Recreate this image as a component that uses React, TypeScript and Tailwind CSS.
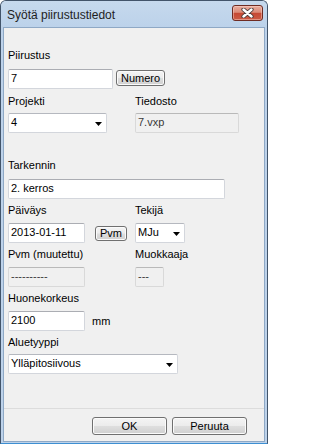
import React from "react";

const Label = ({ children, className = "" }: { children?: React.ReactNode; className?: string }) => (
  <div className={"h-[13px] text-[11px] leading-[13px] text-black whitespace-nowrap " + className}>{children}</div>
);

const TextBox = ({ children, className = "" }: { children?: React.ReactNode; className?: string }) => (
  <div
    className={
      "h-[20px] shrink-0 flex items-center px-[2px] pb-[1px] rounded-[2px] border border-[#d3d6dc] border-t-[#abadb3] bg-white text-[11px] leading-[13px] text-black whitespace-nowrap overflow-hidden " +
      className
    }
  >
    {children}
  </div>
);

const ReadOnly = ({ children, className = "" }: { children?: React.ReactNode; className?: string }) => (
  <div
    className={
      "h-[20px] shrink-0 flex items-center px-[2px] pb-[1px] rounded-[2px] border border-[#d9d9d9] border-t-[#b9b9b9] bg-[#f0f0f0] text-[11px] leading-[13px] text-[#3a3a3a] whitespace-nowrap overflow-hidden " +
      className
    }
  >
    {children}
  </div>
);

const Select = ({ children, className = "" }: { children?: React.ReactNode; className?: string }) => (
  <div
    className={
      "h-[20px] shrink-0 flex items-center justify-between pl-[2px] pr-[4px] pb-[1px] rounded-[2px] border border-[#d3d6dc] border-t-[#b5b8bf] bg-white text-[11px] leading-[13px] text-black whitespace-nowrap overflow-hidden " +
      className
    }
  >
    <span>{children}</span>
    <svg width="7" height="4" viewBox="0 0 7 4" className="mt-[3px] shrink-0">
      <polygon points="0,0 7,0 3.5,4" fill="#000" />
    </svg>
  </div>
);

const Button = ({ children, className = "" }: { children?: React.ReactNode; className?: string }) => (
  <div
    className={
      "shrink-0 flex items-center justify-center rounded-[3px] border border-[#707070] bg-[linear-gradient(to_bottom,#f4f4f4_0%,#ececec_48%,#dedede_52%,#d0d0d0_100%)] shadow-[inset_0_0_0_1px_#fbfbfb] text-[11px] leading-[13px] text-black whitespace-nowrap " +
      className
    }
  >
    {children}
  </div>
);

export default function App() {
  return (
    <div className="w-[268px] h-[444px] flex flex-col overflow-hidden rounded-t-[6px] border border-[#42546a] border-b-[#3d8fd2] bg-[#bdd2ea] font-['Liberation_Sans',Arial,sans-serif]">
      {/* Title bar */}
      <div className="h-[26px] shrink-0 flex items-start justify-between bg-[linear-gradient(to_bottom,#c6d9ed_0%,#bcd2ea_100%)]">
        <div className="pl-[6px] pt-[7px] text-[12px] leading-[14px] text-[#1e1e1e] whitespace-nowrap">
          Syötä piirustustiedot
        </div>
        <div className="mt-[4px] mr-[4px] w-[31px] h-[16px] flex items-center justify-center rounded-[3px] border border-[#6e2b22] bg-[linear-gradient(to_bottom,#e9ad9f_0%,#db8a77_45%,#c64833_52%,#cc5b45_100%)] shadow-[inset_0_0_0_1px_rgba(255,220,210,0.45)]">
          <svg width="13" height="10" viewBox="0 0 13 10">
            <path d="M2.5 1.5 L10.5 8.5 M10.5 1.5 L2.5 8.5" stroke="#4a3a38" strokeWidth="4.2" strokeLinecap="round" />
            <path d="M2.5 1.5 L10.5 8.5 M10.5 1.5 L2.5 8.5" stroke="#ffffff" strokeWidth="2.4" strokeLinecap="round" />
          </svg>
        </div>
      </div>

      {/* Frame + client area */}
      <div className="flex-1 flex flex-col px-[2px] pb-[1px]">
        <div className="flex-1 flex flex-col bg-[#f0f0f0] border border-[#8ea8c5]">
          <div className="flex flex-col pl-[4px] pt-[21px]">
            <Label>Piirustus</Label>
            <div className="mt-[7px] flex items-start">
              <TextBox className="w-[105px]">7</TextBox>
              <Button className="ml-[3px] mt-[1px] w-[49px] h-[16px] pt-[1px]">Numero</Button>
            </div>

            <div className="mt-[6px] flex">
              <Label className="w-[127px]">Projekti</Label>
              <Label>Tiedosto</Label>
            </div>
            <div className="mt-[5px] flex">
              <div className="w-[127px] flex">
                <Select className="w-[99px]">4</Select>
              </div>
              <ReadOnly className="w-[104px]">7.vxp</ReadOnly>
            </div>

            <Label className="mt-[26px]">Tarkennin</Label>
            <TextBox className="mt-[7px] w-[217px] border-[#a9cae8] border-t-[#6e9fcf]">2. kerros</TextBox>

            <div className="mt-[5px] flex">
              <Label className="w-[127px]">Päiväys</Label>
              <Label>Tekijä</Label>
            </div>
            <div className="mt-[6px] flex">
              <div className="w-[127px] flex items-center">
                <TextBox className="w-[77px]">2013-01-11</TextBox>
                <Button className="ml-[10px] w-[32px] h-[15px]">Pvm</Button>
              </div>
              <Select className="w-[50px]">MJu</Select>
            </div>

            <div className="mt-[5px] flex">
              <Label className="w-[127px]">Pvm (muutettu)</Label>
              <Label>Muokkaaja</Label>
            </div>
            <div className="mt-[6px] flex">
              <div className="w-[127px] flex">
                <ReadOnly className="w-[77px]">----------</ReadOnly>
              </div>
              <ReadOnly className="w-[29px]">---</ReadOnly>
            </div>

            <Label className="mt-[5px]">Huonekorkeus</Label>
            <div className="mt-[6px] flex items-center">
              <TextBox className="w-[77px]">2100</TextBox>
              <span className="ml-[7px] text-[11px] leading-[13px] text-black">mm</span>
            </div>

            <Label className="mt-[5px]">Aluetyyppi</Label>
            <Select className="mt-[5px] w-[170px]">Ylläpitosiivous</Select>
          </div>

          <div className="mt-auto border-t border-[#dcdcdc] pt-[8px] pb-[6px] pr-[17px] flex justify-end gap-[5px]">
            <Button className="w-[75px] h-[18px]">OK</Button>
            <Button className="w-[75px] h-[18px]">Peruuta</Button>
          </div>
        </div>
      </div>
    </div>
  );
}
